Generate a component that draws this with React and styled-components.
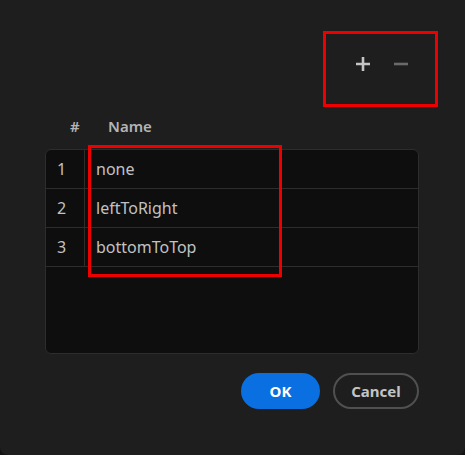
import React from "react";
import styled, { createGlobalStyle } from "styled-components";

const GlobalStyle = createGlobalStyle`
  html, body {
    margin: 0;
    padding: 0;
    background: #121212;
  }
  body {
    font-family: "Noto Sans", "Open Sans", sans-serif;
  }
`;

const Dialog = styled.div`
  position: relative;
  box-sizing: border-box;
  width: 465px;
  height: 455px;
  padding: 52px 46px 0 45px;
  background: #1e1e1e;
  border-radius: 0 0 8px 8px;
  display: flex;
  flex-direction: column;
`;

const Toolbar = styled.div`
  height: 24px;
  display: flex;
  align-items: center;
  justify-content: flex-end;
  gap: 22px;
  padding-right: 10px;
`;

const IconButton = styled.button`
  width: 16px;
  height: 16px;
  padding: 0;
  border: none;
  background: none;
  display: flex;
  align-items: center;
  justify-content: center;
  color: ${(p) => (p.disabled ? "#6a6a6a" : "#c4c4c4")};
`;

const Header = styled.div`
  margin-top: 36px;
  height: 28px;
  display: flex;
  align-items: center;
  font-size: 15px;
  font-weight: 600;
  color: #b4b4b4;
`;

const HeadCell = styled.div`
  width: ${(p) => p.width || "auto"};
  padding-left: ${(p) => p.pad || "0"};
  box-sizing: border-box;
`;

const Table = styled.div`
  margin-top: 9px;
  height: 205px;
  box-sizing: border-box;
  background: #0e0e0e;
  border: 1px solid #2d2d2d;
  border-radius: 6px;
  overflow: hidden;
`;

const Row = styled.div`
  display: flex;
  height: 39px;
  box-sizing: border-box;
  border-bottom: 1px solid #2d2d2d;
  font-size: 16px;
  color: #c2c2c2;
`;

const IndexCell = styled.div`
  width: 39px;
  box-sizing: border-box;
  padding-left: 11px;
  border-right: 1px solid #2d2d2d;
  display: flex;
  align-items: center;
`;

const NameCell = styled.div`
  flex: 1;
  padding-left: 11px;
  display: flex;
  align-items: center;
`;

const Footer = styled.div`
  margin-top: 19px;
  display: flex;
  justify-content: flex-end;
  gap: 13px;
`;

const Button = styled.button`
  height: 36px;
  box-sizing: border-box;
  border-radius: 18px;
  font-family: "Noto Sans", "Open Sans", sans-serif;
  font-size: 15px;
  font-weight: 700;
  padding: 0;
  width: ${(p) => (p.primary ? "79px" : "86px")};
  background: ${(p) => (p.primary ? "#0a6fe0" : "transparent")};
  color: ${(p) => (p.primary ? "#ffffff" : "#c4c4c4")};
  border: ${(p) => (p.primary ? "none" : "2px solid #505050")};
`;

const Marker = styled.div`
  position: absolute;
  box-sizing: border-box;
  border: 3px solid #ee0000;
`;

const rows = ["none", "leftToRight", "bottomToTop"];

const PlusIcon = () => (
  <svg width="16" height="16" viewBox="0 0 16 16">
    <path d="M8 1v14M1 8h14" stroke="currentColor" strokeWidth="2.6" />
  </svg>
);

const MinusIcon = () => (
  <svg width="16" height="16" viewBox="0 0 16 16">
    <path d="M1 8h14" stroke="currentColor" strokeWidth="2.6" />
  </svg>
);

export default function App() {
  return (
    <>
      <GlobalStyle />
      <Dialog>
        <Toolbar>
          <IconButton>
            <PlusIcon />
          </IconButton>
          <IconButton disabled>
            <MinusIcon />
          </IconButton>
        </Toolbar>
        <Header>
          <HeadCell width="63px" pad="25px">#</HeadCell>
          <HeadCell>Name</HeadCell>
        </Header>
        <Table>
          {rows.map((name, i) => (
            <Row key={name}>
              <IndexCell>{i + 1}</IndexCell>
              <NameCell>{name}</NameCell>
            </Row>
          ))}
        </Table>
        <Footer>
          <Button primary>OK</Button>
          <Button>Cancel</Button>
        </Footer>
        <Marker style={{ left: 323, top: 31, width: 115, height: 76 }} />
        <Marker style={{ left: 88, top: 145, width: 194, height: 132 }} />
      </Dialog>
    </>
  );
}
